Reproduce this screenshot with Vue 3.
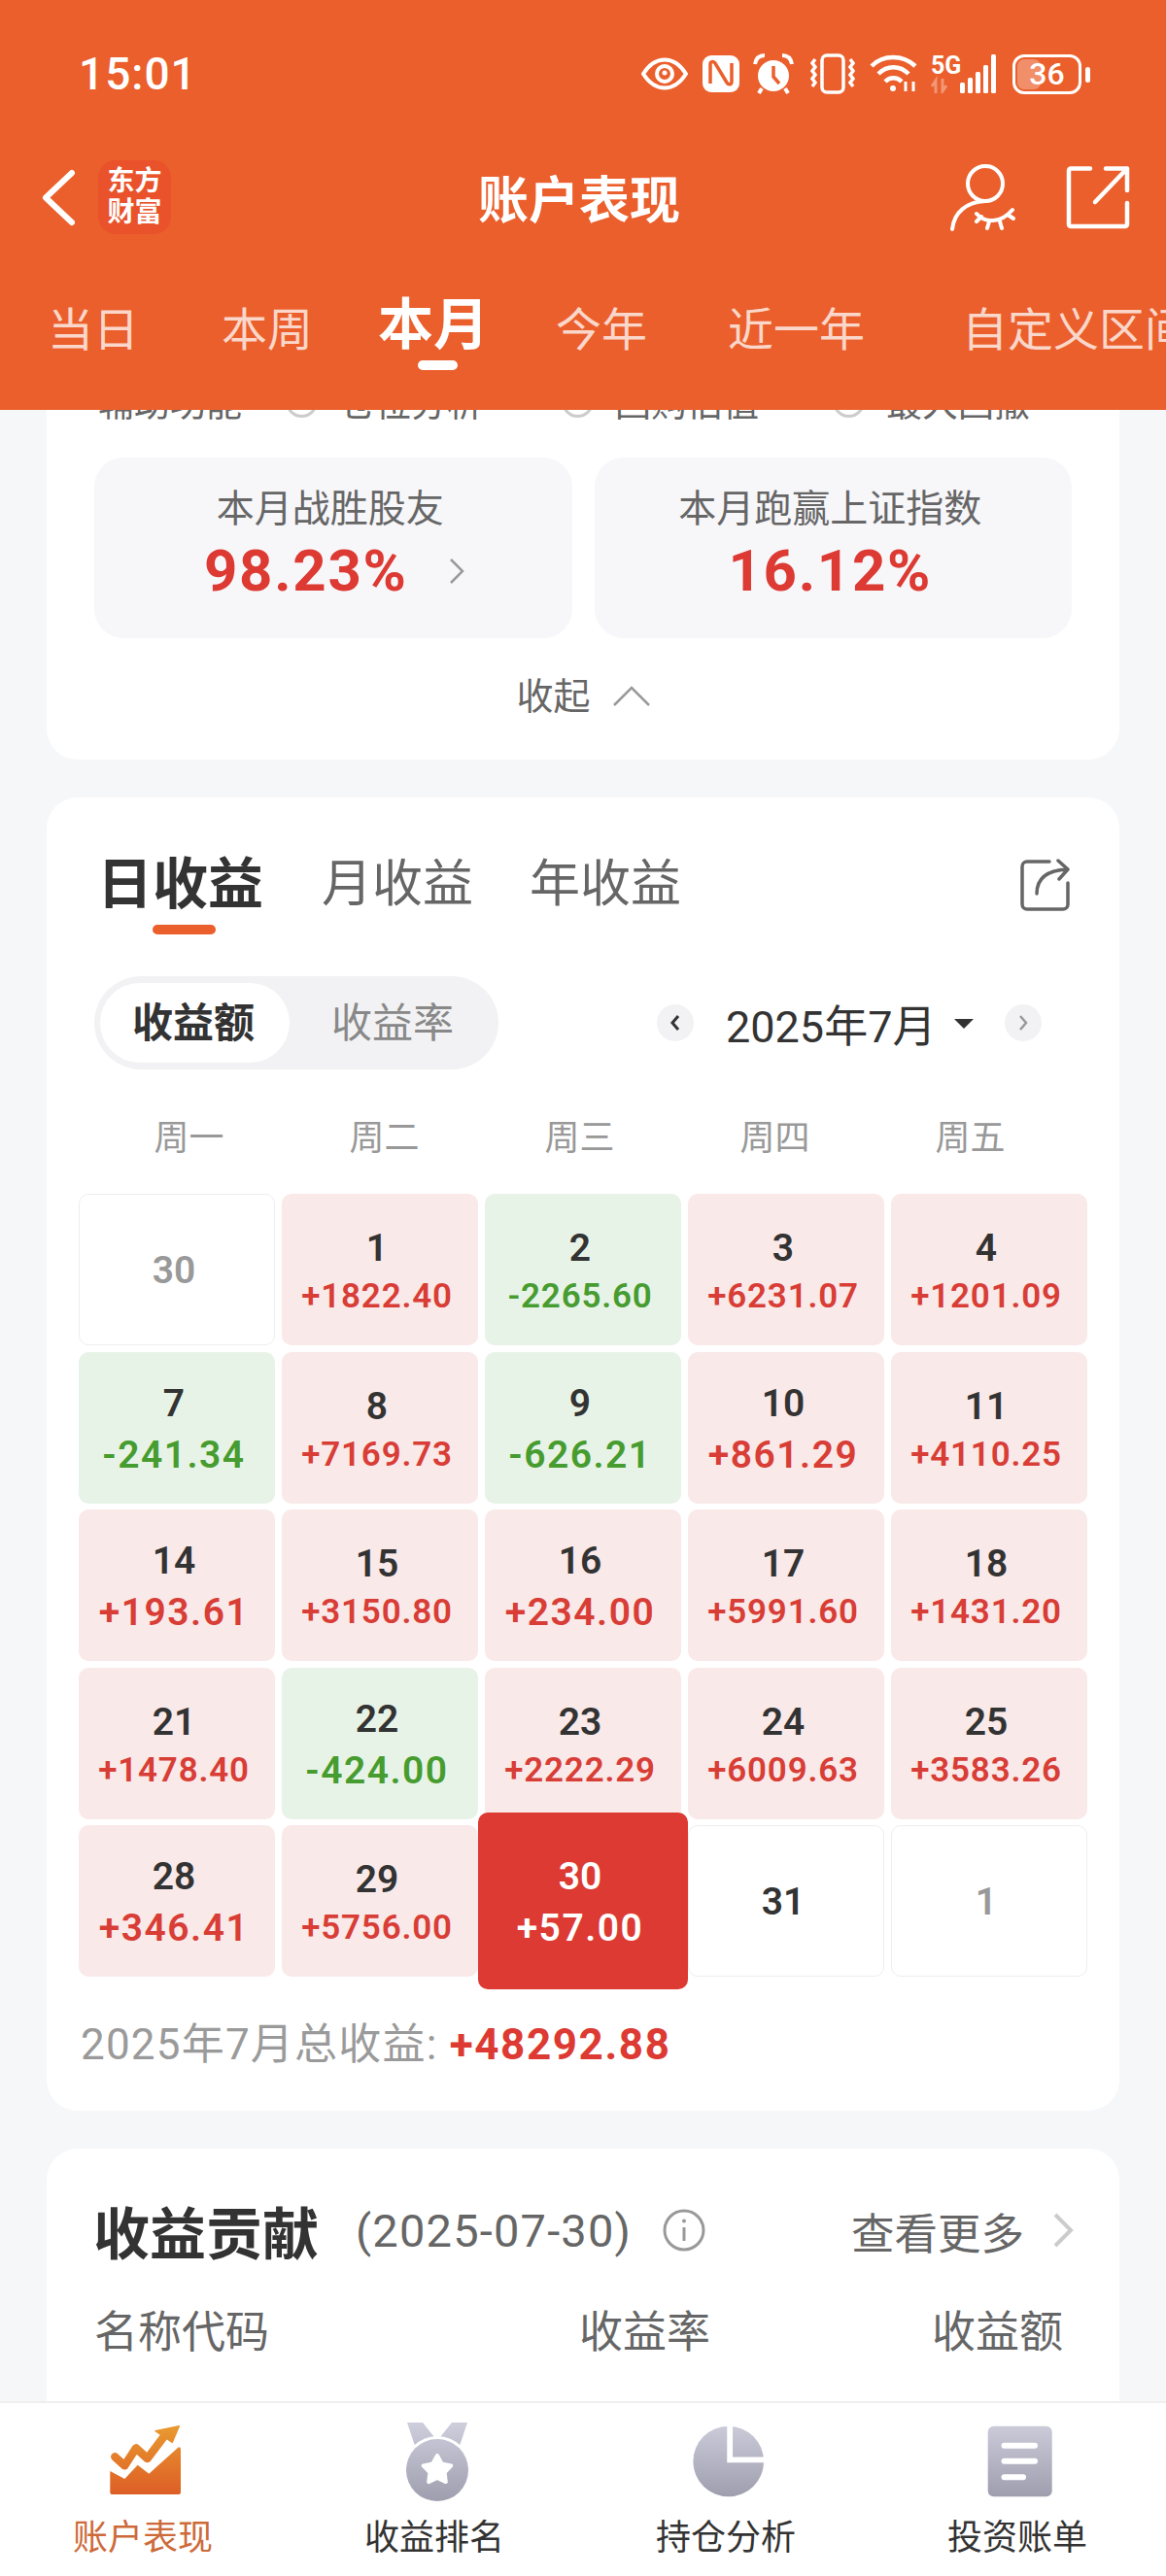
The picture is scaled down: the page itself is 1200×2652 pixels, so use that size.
<script setup>
const tabs = ['当日', '本周', '本月', '今年', '近一年', '自定义区间']
const weekdays = ['周一', '周二', '周三', '周四', '周五']

const days = [
  { d: '30', muted: true }, { d: '1', v: '+1822.40' }, { d: '2', v: '-2265.60' }, { d: '3', v: '+6231.07' }, { d: '4', v: '+1201.09' },
  { d: '7', v: '-241.34' }, { d: '8', v: '+7169.73' }, { d: '9', v: '-626.21' }, { d: '10', v: '+861.29' }, { d: '11', v: '+4110.25' },
  { d: '14', v: '+193.61' }, { d: '15', v: '+3150.80' }, { d: '16', v: '+234.00' }, { d: '17', v: '+5991.60' }, { d: '18', v: '+1431.20' },
  { d: '21', v: '+1478.40' }, { d: '22', v: '-424.00' }, { d: '23', v: '+2222.29' }, { d: '24', v: '+6009.63' }, { d: '25', v: '+3583.26' },
  { d: '28', v: '+346.41' }, { d: '29', v: '+5756.00' }, { d: '30', v: '+57.00', today: true }, { d: '31' }, { d: '1', muted: true },
]

function cellClass(c) {
  return {
    up: c.v && c.v[0] === '+',
    down: c.v && c.v[0] === '-',
    blank: !c.v,
    muted: c.muted,
    today: c.today,
    wide: c.v && c.v.length < 8,
  }
}
</script>

<template>
  <div class="screen">
    <header class="top">
      <div class="status">
        <span class="time">15:01</span>
        <div class="status-icons">
          <svg width="48" height="34" viewBox="0 0 48 34" fill="none" stroke="#fff" stroke-width="4">
            <path d="M2 17C9 6 16 2.500 24 2.500S39 6 46 17C39 28 32 31.500 24 31.500S9 28 2 17Z" />
            <circle cx="24" cy="17" r="8" />
            <circle cx="24" cy="16" r="2.500" fill="#fff" stroke="none" />
          </svg>
          <svg width="38" height="38" viewBox="0 0 38 38" fill="none">
            <rect x="0" y="0" width="38" height="38" rx="9" fill="#fff" />
            <path d="M8 29V9c0-3 3-3 5-1l12 20c2 3 5 2 5-1V8" stroke="#EB5F2C" stroke-width="3.500" />
          </svg>
          <svg width="42" height="42" viewBox="0 0 42 42" fill="none">
            <circle cx="21" cy="23" r="16" fill="#fff" />
            <path d="M21 13v11l6 7" stroke="#EB5F2C" stroke-width="3.500" />
            <path d="M2 11C3 5 7 2 12 2M40 11C39 5 35 2 30 2" stroke="#fff" stroke-width="4" />
            <path d="M9 36l-3 5M33 36l3 5" stroke="#fff" stroke-width="4" />
          </svg>
          <svg width="46" height="42" viewBox="0 0 46 42" fill="none" stroke="#fff" stroke-width="3.500">
            <rect x="12" y="2" width="22" height="38" rx="5" />
            <path d="M5 6l-3 4 3 4-3 4 3 4-3 4 3 4-3 4M41 6l3 4-3 4 3 4-3 4 3 4-3 4 3 4" />
          </svg>
          <svg width="51" height="40" viewBox="0 0 51 40" fill="none" stroke="#fff" stroke-width="4.500">
            <path d="M2 12C14 0 34 0 47 12" />
            <path d="M9 20C18 11 31 11 40 20" />
            <path d="M16 28C21 23 28 23 33 28" />
            <circle cx="24" cy="35" r="3" fill="#fff" stroke="none" />
            <path d="M37 28v10M45 38V28" stroke-width="3" />
          </svg>
          <svg width="67" height="40" viewBox="0 0 67 40">
            <text x="0" y="20" class="five-g">5G</text>
            <path d="M5 40V27l-4 6M12 25v13l4-6" fill="none" stroke="#fff" stroke-opacity=".35" stroke-width="3" />
            <rect x="30" y="29" width="5" height="11" rx="1.500" fill="#fff" />
            <rect x="38" y="24" width="5" height="16" rx="1.500" fill="#fff" />
            <rect x="46" y="18" width="5" height="22" rx="1.500" fill="#fff" />
            <rect x="54" y="11" width="5" height="29" rx="1.500" fill="#fff" />
            <rect x="62" y="0" width="5" height="40" rx="1.500" fill="#fff" />
          </svg>
          <div class="battery">
            <span class="battery-fill" />
            <span class="battery-num">36</span>
            <span class="battery-nub" />
          </div>
        </div>
      </div>

      <nav class="nav">
        <svg class="back" width="37" height="59" viewBox="0 0 37 59" fill="none" stroke="#fff" stroke-width="6" stroke-linecap="round" stroke-linejoin="round">
          <path d="M32 4L5 29.500 32 55" />
        </svg>
        <div class="logo">东方<br />财富</div>
        <div class="nav-title">账户表现</div>
        <svg class="nav-person" width="80" height="80" viewBox="0 0 80 80" fill="none" stroke="#fff" stroke-width="4" stroke-linecap="round">
          <circle cx="44" cy="26" r="18" />
          <path d="M44 44C25 45 12 55 10 73" />
          <path d="M35 57C44 67 60 67 72 53" />
          <path d="M40 60l-5 5M48 65l-2 7M59 65l2 7M67 58l6 4" />
        </svg>
        <svg class="nav-share" width="70" height="70" viewBox="0 0 70 70" fill="none" stroke="#fff" stroke-width="4.500" stroke-linecap="round" stroke-linejoin="round">
          <path d="M27 5.500H7a2 2 0 0 0-2 2V63a2 2 0 0 0 2 2h56a2 2 0 0 0 2-2V41" />
          <path d="M43 5.500H65V28M65 5.500L32 40" />
        </svg>
      </nav>

      <div class="range-tabs">
        <div v-for="t in tabs" :key="t" class="range-tab" :class="{ on: t === '本月' }">{{ t }}</div>
      </div>
    </header>

    <main class="scroller">
      <section class="card card-stats">
        <div class="aux-row">
          <span class="aux-label">辅助功能</span>
          <span class="radio r1" /><span>仓位分析</span>
          <span class="radio r2" /><span>回购估值</span>
          <span class="radio r3" /><span>最大回撤</span>
        </div>
        <div class="stat-row">
          <div class="stat">
            <div class="stat-label">本月战胜股友</div>
            <div class="stat-value first">
              98.23%
              <svg class="stat-arrow" width="16" height="28" viewBox="0 0 16 28" fill="none" stroke="#999" stroke-width="2.500">
                <path d="M2 2l12 12L2 26" />
              </svg>
            </div>
          </div>
          <div class="stat">
            <div class="stat-label">本月跑赢上证指数</div>
            <div class="stat-value">16.12%</div>
          </div>
        </div>
        <div class="collapse">
          <span>收起</span>
          <svg width="38" height="22" viewBox="0 0 38 22" fill="none" stroke="#999" stroke-width="2.500">
            <path d="M1 20L19 2l18 18" />
          </svg>
        </div>
      </section>

      <section class="card card-cal">
        <div class="profit-tabs">
          <div class="profit-tab on">日收益</div>
          <div class="profit-tab">月收益</div>
          <div class="profit-tab">年收益</div>
          <svg class="cal-share" width="52" height="54" viewBox="0 0 52 54" fill="none" stroke="#666" stroke-width="3.500" stroke-linecap="round" stroke-linejoin="round">
            <path d="M30 3H7a5 5 0 0 0-5 5v39a5 5 0 0 0 5 5h37a5 5 0 0 0 5-5V25" />
            <path d="M17 36C17 21 27 12 48 11M39 2l10 9-9 10" />
          </svg>
        </div>

        <div class="controls">
          <div class="seg">
            <div class="seg-item on">收益额</div>
            <div class="seg-item">收益率</div>
          </div>
          <div class="month">
            <span class="month-btn">
              <svg width="12" height="18" viewBox="0 0 12 18" fill="none" stroke="#333" stroke-width="3"><path d="M9 2L3 9l6 7" /></svg>
            </span>
            <span class="month-text">2025年7月</span>
            <span class="month-caret" />
            <span class="month-btn">
              <svg width="12" height="18" viewBox="0 0 12 18" fill="none" stroke="#999" stroke-width="2.500"><path d="M3 2l6 7-6 7" /></svg>
            </span>
          </div>
        </div>

        <div class="week">
          <span v-for="w in weekdays" :key="w">{{ w }}</span>
        </div>

        <div class="grid">
          <div v-for="(c, i) in days" :key="i" class="cell" :class="cellClass(c)">
            <div class="cell-day">{{ c.d }}</div>
            <div v-if="c.v" class="cell-val">{{ c.v }}</div>
          </div>
        </div>

        <div class="total">2025年7月总收益: <b>+48292.88</b></div>
      </section>

      <section class="card card-contrib">
        <div class="contrib-head">
          <h2>收益贡献</h2>
          <span class="contrib-date">(2025-07-30)</span>
          <svg class="info" width="44" height="44" viewBox="0 0 44 44" fill="none" stroke="#999" stroke-width="3">
            <circle cx="22" cy="22" r="20" />
            <path d="M22 19v14" />
            <circle cx="22" cy="12.500" r="2" fill="#999" stroke="none" />
          </svg>
          <span class="more">查看更多</span>
          <svg width="23" height="36" viewBox="0 0 23 36" fill="none" stroke="#ccc" stroke-width="4">
            <path d="M3 2l16 16L3 34" />
          </svg>
        </div>
        <div class="contrib-cols">
          <span>名称代码</span>
          <span>收益率</span>
          <span>收益额</span>
        </div>
      </section>
    </main>

    <footer class="tabbar">
      <div class="bar-item active">
        <svg width="80" height="76" viewBox="0 0 80 76">
          <defs>
            <linearGradient id="gOrange" gradientUnits="userSpaceOnUse" x1="0" y1="0" x2="0" y2="72">
              <stop offset="0" stop-color="#E99B30" />
              <stop offset="1" stop-color="#DD5E26" />
            </linearGradient>
          </defs>
          <path d="M3.300 70V48L18.300 56 31.700 41.700 43.300 50.700 73 24Q76 22 76 26V70Q76 72 74 72H5Q3.300 72 3.300 70Z" fill="url(#gOrange)" />
          <path d="M8.300 33.300L18.300 42.300 30 24.300 41.700 35 58.300 13" fill="none" stroke="url(#gOrange)" stroke-width="8.500" stroke-linecap="round" stroke-linejoin="round" />
          <path d="M50 6.700L74.300 1.700 67.300 18.300Z" fill="url(#gOrange)" stroke="url(#gOrange)" stroke-width="1.500" stroke-linejoin="round" />
        </svg>
        <span>账户表现</span>
      </div>
      <div class="bar-item">
        <svg width="72" height="84" viewBox="0 0 72 84">
          <defs>
            <linearGradient id="gGrey" gradientUnits="userSpaceOnUse" x1="0" y1="0" x2="0" y2="84">
              <stop offset="0" stop-color="#CFCFDE" />
              <stop offset="1" stop-color="#9D9DAD" />
            </linearGradient>
          </defs>
          <path d="M5 2H21L33 17 20 25Q13 28 12 23ZM67 2H51L39 17 52 25Q59 28 60 23Z" fill="url(#gGrey)" />
          <circle cx="36" cy="51" r="35" fill="#fff" />
          <circle cx="36" cy="51" r="32" fill="url(#gGrey)" />
          <path d="M36 36L40.700 44.500 50.300 46.400 43.600 53.500 44.800 63.100 36 59 27.200 63.100 28.400 53.500 21.700 46.400 31.300 44.500Z" fill="#fff" stroke="#fff" stroke-width="4" stroke-linejoin="round" />
        </svg>
        <span>收益排名</span>
      </div>
      <div class="bar-item">
        <svg width="80" height="80" viewBox="0 0 80 80">
          <defs>
            <linearGradient id="gGrey2" gradientUnits="userSpaceOnUse" x1="0" y1="4" x2="0" y2="76">
              <stop offset="0" stop-color="#CACAD9" />
              <stop offset="1" stop-color="#9E9EAE" />
            </linearGradient>
          </defs>
          <circle cx="39.700" cy="40" r="36.300" fill="url(#gGrey2)" />
          <path d="M41.150 0V38.300H80" fill="none" stroke="#fff" stroke-width="5.800" />
        </svg>
        <span>持仓分析</span>
      </div>
      <div class="bar-item">
        <svg width="70" height="76" viewBox="0 0 70 76">
          <defs>
            <linearGradient id="gGrey3" gradientUnits="userSpaceOnUse" x1="0" y1="2" x2="0" y2="74">
              <stop offset="0" stop-color="#CACAD9" />
              <stop offset="1" stop-color="#9E9EAE" />
            </linearGradient>
          </defs>
          <rect x="1.700" y="1.700" width="66" height="72.600" rx="6" fill="url(#gGrey3)" />
          <path d="M18.500 21.700H50M18.500 37.700H50M18.500 54.300H38" stroke="#fff" stroke-width="6" stroke-linecap="round" />
        </svg>
        <span>投资账单</span>
      </div>
    </footer>
  </div>
</template>

<style>
html, body {
  margin: 0;
  background: #f6f7f9;
}
</style>

<style scoped>
.screen {
  width: 1200px;
  height: 2652px;
  display: flex;
  flex-direction: column;
  overflow: hidden;
  background: #f6f7f9;
  font-family: Roboto, "Noto Sans CJK SC", sans-serif;
  color: #333;
}

/* header */
.top {
  height: 422px;
  flex: none;
  background: #eb5f2c;
  color: #fff;
  position: relative;
  z-index: 2;
  overflow: hidden;
}
.status {
  display: flex;
  align-items: center;
  height: 42px;
  padding: 55px 78px 0 81px;
}
.time {
  font-size: 46px;
  font-weight: 500;
  letter-spacing: 1px;
}
.status-icons {
  margin-left: auto;
  display: flex;
  align-items: center;
  gap: 15px;
}
.status-icons svg:nth-child(3) { margin-left: -1px; }
.status-icons svg:nth-child(4) { margin-left: 2px; }
.status-icons svg:nth-child(6) { margin-left: -3px; }
.five-g {
  font-size: 25px;
  font-weight: 700;
  fill: #fff;
}
.battery {
  position: relative;
  width: 71px;
  height: 41px;
  margin: 0 9px 0 2px;
  border: 3.5px solid #fff;
  border-radius: 12px;
  box-sizing: border-box;
  display: flex;
  align-items: center;
  justify-content: center;
}
.battery-fill {
  position: absolute;
  left: 2px;
  top: 2px;
  bottom: 2px;
  width: 24px;
  border-radius: 7px;
  background: rgba(255, 255, 255, 0.3);
}
.battery-num {
  position: relative;
  font-size: 32px;
  font-weight: 500;
  line-height: 1;
}
.battery-nub {
  position: absolute;
  right: -12px;
  top: 10px;
  width: 5px;
  height: 16px;
  border-radius: 3px;
  background: #fff;
}

.nav {
  display: flex;
  align-items: center;
  height: 80px;
  margin-top: 66px;
  padding-left: 42px;
}
.logo {
  width: 75px;
  height: 76px;
  margin-left: 22px;
  border-radius: 18px;
  background: #e9522a;
  font-size: 28px;
  font-weight: 700;
  line-height: 32px;
  text-align: center;
  padding-top: 6px;
  box-sizing: border-box;
}
.nav-title {
  width: 208px;
  margin-left: 316px;
  margin-top: -2px;
  font-size: 52px;
  font-weight: 700;
  white-space: nowrap;
}
.nav-person {
  margin-left: 270px;
}
.nav-share {
  margin-left: 45px;
}

.range-tabs {
  display: flex;
  align-items: center;
  margin-top: 59px;
  height: 76px;
  padding-left: 49px;
  white-space: nowrap;
}
.range-tab {
  flex: none;
  font-size: 47px;
  line-height: 60px;
  color: rgba(255, 255, 255, 0.76);
}
.range-tab:nth-child(2) { margin-left: 85px; }
.range-tab:nth-child(3) { margin-left: 67px; }
.range-tab:nth-child(4) { margin-left: 69px; }
.range-tab:nth-child(5) { margin-left: 83px; }
.range-tab:nth-child(6) { margin-left: 100px; }
.range-tab.on {
  position: relative;
  font-size: 57px;
  font-weight: 700;
  color: #fff;
  transform: translateY(-5px);
}
.range-tab.on::after {
  content: "";
  position: absolute;
  left: 41px;
  bottom: -16px;
  width: 41px;
  height: 10px;
  border-radius: 5px;
  background: #fff;
}

/* scrolled content */
.scroller {
  flex: 1;
  min-height: 0;
  overflow: hidden;
}
.card {
  margin: 0 48px 39px;
  background: #fff;
  border-radius: 32px;
}
.card-stats {
  margin-top: -60px;
  padding: 31px 0 42px;
}
.aux-row {
  display: flex;
  align-items: center;
  height: 40px;
  padding-left: 53px;
  font-size: 37px;
  color: #666;
  white-space: nowrap;
}
.radio {
  width: 27px;
  height: 27px;
  border: 3px solid #ccc;
  border-radius: 50%;
  margin-right: 22px;
  flex: none;
}
.r1 { margin-left: 45px; }
.r2 { margin-left: 81px; }
.r3 { margin-left: 76px; }

.stat-row {
  display: flex;
  gap: 23px;
  margin-top: 38px;
  padding: 0 49px;
}
.stat {
  flex: 1;
  height: 186px;
  border-radius: 30px;
  background: #f7f7fa;
  padding: 30px 6px 0 0;
  box-sizing: border-box;
  text-align: center;
}
.stat-label {
  font-size: 39px;
  line-height: 46px;
  color: #666;
}
.stat-value {
  display: flex;
  align-items: center;
  justify-content: center;
  margin-top: 6px;
  font-size: 60px;
  font-weight: 700;
  line-height: 70px;
  letter-spacing: 1.7px;
  color: #dc3a32;
}
.stat-value.first {
  padding-left: 8px;
}
.stat-arrow {
  margin-left: 42px;
}
.collapse {
  display: flex;
  align-items: center;
  justify-content: center;
  gap: 23px;
  margin-top: 37px;
  font-size: 38px;
  line-height: 46px;
  color: #666;
}

/* calendar card */
.card-cal {
  padding: 55px 0 38px;
}
.profit-tabs {
  display: flex;
  align-items: center;
  gap: 58px;
  height: 70px;
  padding: 0 50px 0 52px;
}
.profit-tab {
  position: relative;
  font-size: 52px;
  line-height: 70px;
  color: #666;
}
.profit-tab.on {
  font-size: 57px;
  font-weight: 700;
  color: #333;
  margin-right: 2px;
}
.profit-tab.on::after {
  content: "";
  position: absolute;
  left: 57px;
  bottom: -16px;
  width: 65px;
  height: 10px;
  border-radius: 5px;
  background: #eb5f2c;
}
.cal-share {
  margin-left: auto;
}

.controls {
  display: flex;
  align-items: center;
  margin-top: 59px;
  padding-left: 49px;
}
.seg {
  display: flex;
  width: 416px;
  height: 96px;
  padding: 7px 6px;
  box-sizing: border-box;
  border-radius: 48px;
  background: #f2f2f4;
}
.seg-item {
  flex: 1;
  text-align: center;
  font-size: 42px;
  line-height: 84px;
  color: #888;
  padding-left: 3px;
}
.seg-item.on {
  flex: none;
  width: 195px;
  height: 82px;
  padding: 0 3px 0 0;
  box-sizing: border-box;
  border-radius: 42px;
  background: #fff;
  font-weight: 700;
  color: #333;
}
.month {
  display: flex;
  align-items: center;
  margin-left: 163px;
}
.month-btn {
  width: 38px;
  height: 38px;
  border-radius: 50%;
  background: #f2f2f4;
  display: flex;
  align-items: center;
  justify-content: center;
}
.month-text {
  margin: 0 19px 0 33px;
  font-size: 45px;
  color: #333;
  white-space: nowrap;
}
.month-caret {
  width: 0;
  height: 0;
  margin-right: 32px;
  margin-top: 2px;
  border-left: 10px solid transparent;
  border-right: 10px solid transparent;
  border-top: 10px solid #333;
}

.week {
  display: grid;
  grid-template-columns: repeat(5, 201px);
  margin-top: 51px;
  padding-left: 46px;
  font-size: 36px;
  line-height: 40px;
  color: #999;
  text-align: center;
}

.grid {
  display: grid;
  grid-template-columns: repeat(5, 202px);
  grid-auto-rows: 156px;
  column-gap: 7px;
  row-gap: 6.5px;
  margin-top: 37px;
  padding-left: 33px;
}
.cell {
  position: relative;
  display: flex;
  flex-direction: column;
  align-items: center;
  justify-content: center;
  padding: 2px 6px 0 0;
  box-sizing: border-box;
  border-radius: 10px;
}
.cell-day {
  position: relative;
  font-size: 39px;
  font-weight: 600;
  line-height: 54px;
  color: #333;
}
.cell-val {
  position: relative;
  font-size: 35px;
  font-weight: 600;
  line-height: 46px;
  letter-spacing: 0.8px;
}
.cell.wide .cell-val {
  font-size: 39px;
  font-weight: 600;
  line-height: 52px;
  letter-spacing: 1.5px;
}
.cell.up {
  background: #fae9e9;
  color: #d83d36;
}
.cell.down {
  background: #e8f3e7;
  color: #479c30;
}
.cell.blank {
  border: 1.5px solid #eee;
}
.cell.muted .cell-day {
  color: #999;
}
.cell.today {
  background: none;
  color: #fff;
}
.cell.today::before {
  content: "";
  position: absolute;
  inset: -13px -7px;
  border-radius: 10px;
  background: #dc3a32;
}
.cell.today .cell-day {
  color: #fff;
}

.total {
  margin-top: 40px;
  padding-left: 35px;
  font-size: 44px;
  line-height: 60px;
  letter-spacing: 1.2px;
  color: #9a9a9a;
}
.total b {
  font-weight: 700;
  letter-spacing: 1.6px;
  color: #dc3a32;
}

/* contribution card */
.card-contrib {
  height: 400px;
  margin-bottom: 0;
  padding-top: 49px;
  box-sizing: border-box;
}
.contrib-head {
  display: flex;
  align-items: center;
  height: 70px;
  padding: 0 46px 0 48px;
}
.contrib-head h2 {
  margin: 0;
  font-size: 58px;
  font-weight: 700;
  color: #333;
}
.contrib-date {
  margin-left: 38px;
  font-size: 47px;
  letter-spacing: 1.2px;
  color: #666;
}
.info {
  margin-left: 32px;
}
.more {
  margin: 0 29px 0 auto;
  font-size: 44.5px;
  color: #666;
}
.contrib-cols {
  display: grid;
  grid-template-columns: 499px 1fr auto;
  margin-top: 41px;
  padding: 0 58px 0 49px;
  font-size: 45px;
  line-height: 60px;
  color: #666;
}

/* bottom bar */
.tabbar {
  flex: none;
  height: 180px;
  display: grid;
  grid-template-columns: repeat(4, 300px);
  background: #fff;
  border-top: 2px solid #efefef;
  box-sizing: border-box;
  position: relative;
  z-index: 2;
}
.bar-item {
  position: relative;
  display: flex;
  flex-direction: column;
  align-items: center;
  height: 178px;
  padding-top: 18px;
  box-sizing: border-box;
}
.bar-item svg {
  height: 84px;
  flex: none;
}
.bar-item span {
  position: absolute;
  top: 115px;
  left: 0;
  right: 6px;
  text-align: center;
  font-size: 36px;
  line-height: 48px;
  color: #333;
}
.bar-item.active span {
  color: #cd6a3a;
}
</style>
